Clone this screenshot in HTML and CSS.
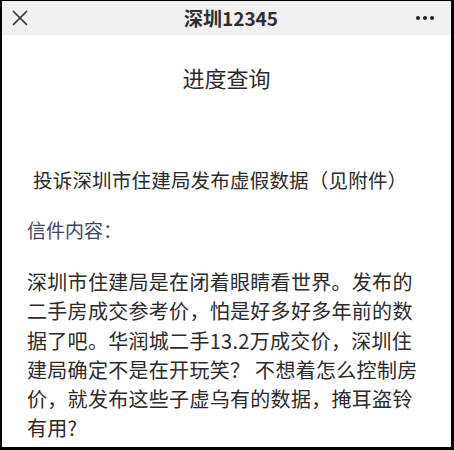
FILE: index.html
```html
<!DOCTYPE html>
<html lang="zh-CN">
<head>
<meta charset="utf-8">
<title>深圳12345</title>
<link rel="stylesheet" href="styles.css">
</head>
<body>
<div class="frame">
  <header class="topbar">
    <svg class="close" width="16" height="16" viewBox="0 0 16 16" aria-hidden="true">
      <path d="M1.5 1.5 L14.5 14.5 M14.5 1.5 L1.5 14.5" stroke="#333" stroke-width="1.7" fill="none" stroke-linecap="round"/>
    </svg>
    <div class="app-title">深圳12345</div>
    <div class="more" aria-hidden="true"><i></i><i></i><i></i></div>
  </header>
  <main class="content">
    <h1 class="page-title">进度查询</h1>
    <h2 class="subject">投诉深圳市住建局发布虚假数据（见附件）</h2>
    <div class="label">信件内容：</div>
    <p class="body-text">深圳市住建局是在闭着眼睛看世界。发布的<br>二手房成交参考价，怕是好多好多年前的数<br>据了吧。华润城二手13.2万成交价，深圳住<br>建局确定不是在开玩笑？ 不想着怎么控制房<br>价，就发布这些子虚乌有的数据，掩耳盗铃<br>有用?</p>
  </main>
</div>
</body>
</html>
```
FILE: styles.css
```css
html, body {
  margin: 0;
  padding: 0;
  background: #000;
}
body {
  font-family: "Noto Sans CJK SC", "Noto Sans", sans-serif;
  color: #2b2b2b;
}
.frame {
  box-sizing: border-box;
  width: 454px;
  height: 450px;
  border-style: solid;
  border-color: #000;
  border-width: 1px 3px 3px 2px;
  background: #fff;
  overflow: hidden;
}
.topbar {
  height: 34px;
  background: #f1f1f1;
  display: flex;
  align-items: center;
  justify-content: space-between;
  padding: 0 17px 0 10px;
}
.close {
  display: block;
}
.app-title {
  font-size: 19px;
  font-weight: 700;
  line-height: 34px;
  color: #2e2e2e;
  margin-left: 18px;
}
.more {
  display: flex;
  gap: 3px;
  align-items: center;
}
.more i {
  display: block;
  width: 4px;
  height: 4px;
  border-radius: 50%;
  background: #222;
}
.content {
  display: flex;
  flex-direction: column;
}
.page-title {
  margin: 27px 0 0;
  font-size: 22px;
  font-weight: 400;
  line-height: 30px;
  text-align: center;
  color: #2b2b2b;
}
.subject {
  margin: 73px 0 0;
  padding-left: 31px;
  font-size: 19.5px;
  font-weight: 400;
  line-height: 30px;
  letter-spacing: 0.2px;
  color: #2b2b2b;
  white-space: nowrap;
}
.label {
  margin-top: 21px;
  padding-left: 25px;
  font-size: 19px;
  line-height: 28px;
  color: #404466;
}
.body-text {
  margin: 23px 0 0;
  padding-left: 25px;
  font-size: 20px;
  line-height: 29.3px;
  letter-spacing: 0.3px;
  color: #2b2b2b;
  white-space: nowrap;
}
```
